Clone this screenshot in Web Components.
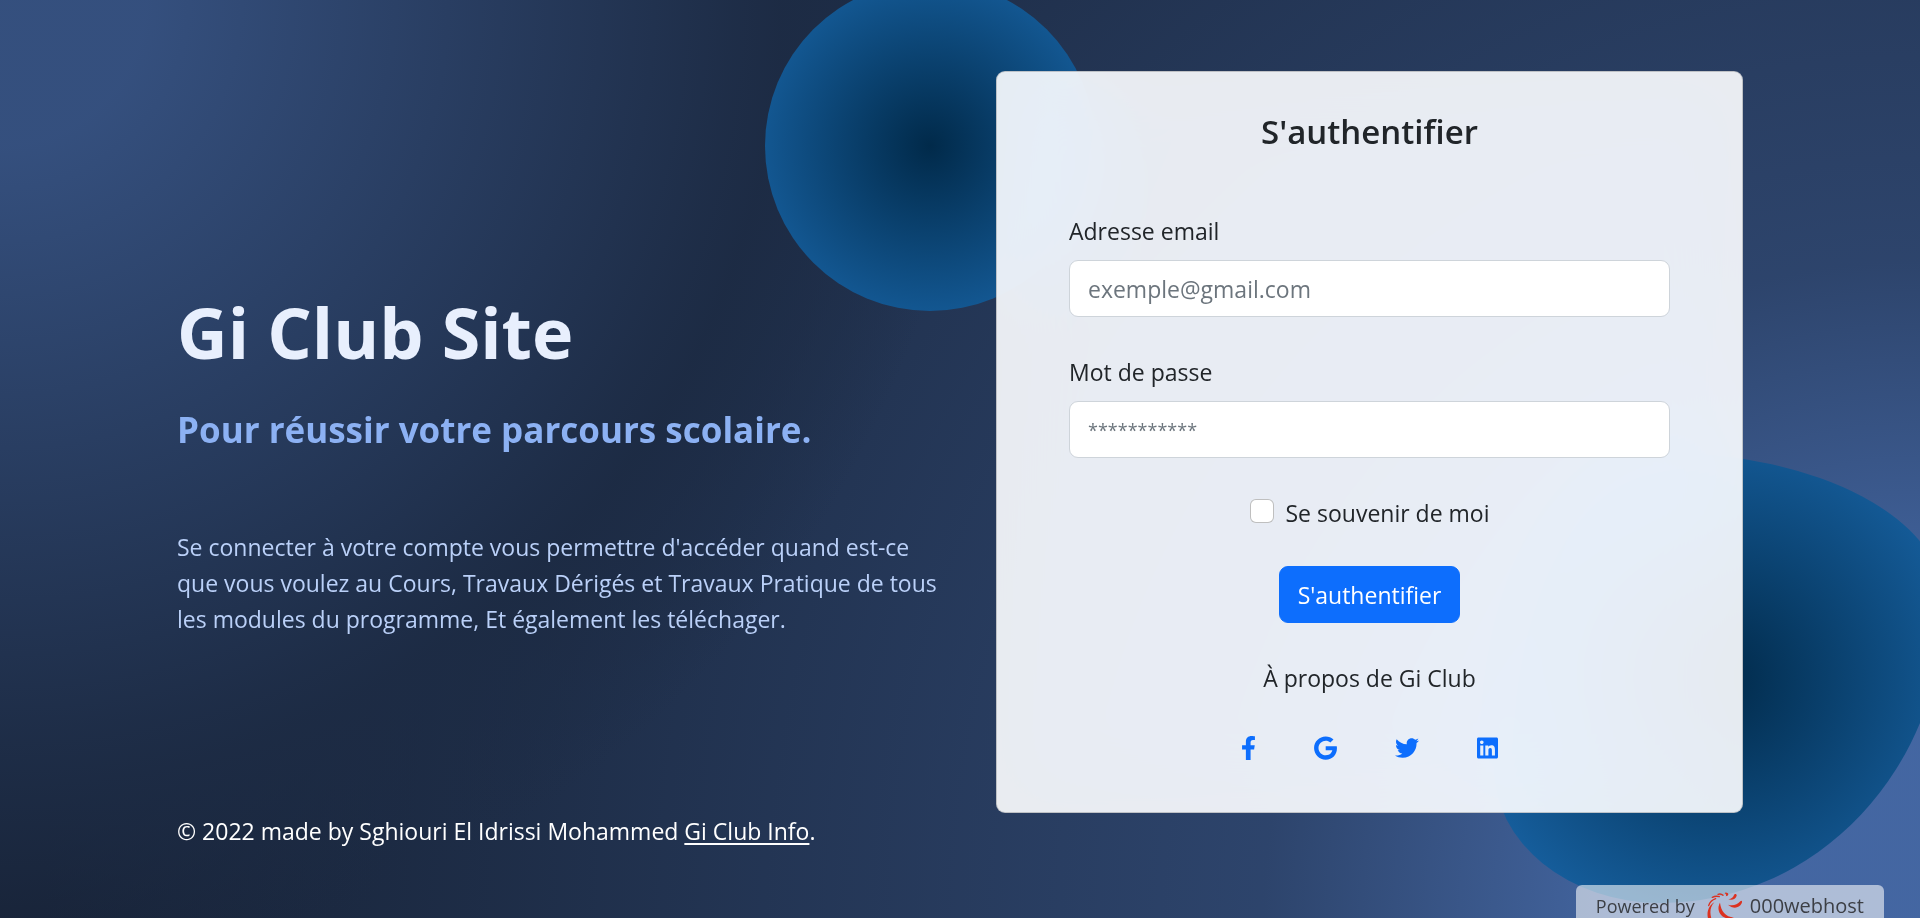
<!DOCTYPE html>
<html lang="fr">
<head>
<meta charset="utf-8">
<title>Gi Club Site</title>
<style>
  body { margin: 0; font-family: "Open Sans", "Noto Sans", sans-serif; font-size: 23px; line-height: 36px; color: #212529; }
</style>
</head>
<body>
<gi-page>
  <gi-hero slot="intro">
    <span slot="title">Gi Club Site</span>
    <span slot="tagline">Pour réussir votre parcours scolaire.</span>
    Se connecter à votre compte vous permettre d'accéder quand est-ce que vous voulez au Cours, Travaux Dérigés et Travaux Pratique de tous les modules du programme, Et également les téléchager.
  </gi-hero>
  <gi-login slot="login"></gi-login>
  <gi-footer slot="footer"></gi-footer>
</gi-page>
<gi-host-badge></gi-host-badge>

<script>
class GiElement extends HTMLElement {
  constructor() {
    super();
    this.attachShadow({ mode: "open" }).innerHTML =
      "<style>*{box-sizing:border-box}" + this.constructor.css + "</style>" + this.constructor.html;
  }
}

customElements.define("gi-page", class extends GiElement {
  static css = `
    :host { display: block; min-height: 100vh; overflow: hidden; position: relative;
      background-color: hsl(218,41%,15%);
      background-image:
        radial-gradient(975px circle at 0% 0%, hsl(218,41%,35%) 15%, hsl(218,41%,30%) 35%, hsl(218,41%,20%) 75%, hsl(218,41%,19%) 80%, transparent 100%),
        radial-gradient(1875px circle at 100% 100%, hsl(218,41%,45%) 15%, hsl(218,41%,30%) 35%, hsl(218,41%,20%) 75%, hsl(218,41%,19%) 80%, transparent 100%); }
    .container { max-width: 1710px; box-sizing: border-box; margin: 0 auto; padding: 71px 72px 48px; }
    .row { display: grid; grid-template-columns: minmax(0,1fr) minmax(0,1fr); gap: 72px; align-items: center; }
    .side { position: relative; }
    .shape { position: absolute; background: radial-gradient(#012a4a, #1a69ae); }
    .one { width: 330px; height: 330px; top: -90px; left: -231px; border-radius: 50%; }
    .two { width: 450px; height: 450px; bottom: -90px; right: -201px; border-radius: 38% 62% 63% 37% / 70% 33% 67% 30%; }
    ::slotted(gi-login) { position: relative; }
    @media (max-width: 1100px) {
      .container { padding: 48px 24px; }
      .row { grid-template-columns: minmax(0,1fr); }
    }`;
  static html = `
    <div class="container">
      <main class="row">
        <slot name="intro"></slot>
        <div class="side">
          <div class="shape one"></div>
          <div class="shape two"></div>
          <slot name="login"></slot>
        </div>
      </main>
      <slot name="footer"></slot>
    </div>`;
});

customElements.define("gi-hero", class extends GiElement {
  static css = `
    :host { display: block; padding-top: 40px; }
    h1 { margin: 0; font-size: 70px; line-height: 88px; font-weight: 700; color: hsl(218,81%,95%); }
    h1 .tag { display: block; margin-top: 10px; font-size: 35px; color: hsl(218,81%,75%); }
    p { margin: 55px -24px 0 0; color: hsl(218,81%,85%); }
    @media (max-width: 1100px) { p { margin-right: 0; } }`;
  static html = `
    <h1><slot name="title"></slot><span class="tag"><slot name="tagline"></slot></span></h1>
    <p><slot></slot></p>`;
});

customElements.define("gi-login", class extends GiElement {
  static css = `
    :host { display: block; border: 1px solid rgba(0,0,0,.18); border-radius: 9px; background: rgba(255,255,255,.9);
      backdrop-filter: saturate(200%) blur(38px); padding: 36px 72px 46px; }
    form { display: flex; flex-direction: column; align-items: center; }
    h2 { margin: 0 0 57px; font-size: 33px; line-height: 48px; font-weight: 600; }
    gi-field { align-self: stretch; margin-bottom: 37px; }
    .check { display: flex; align-items: flex-start; gap: 12px; margin-bottom: 35px; }
    .check input { appearance: none; width: 24px; height: 24px; margin: 4px 0 0; background: #fff; border: 1px solid rgba(0,0,0,.25); border-radius: 6px; }
    .check input:checked { background: #0d6efd; }
    button { font: inherit; color: #fff; background: #0d6efd; border: 1px solid #0d6efd; border-radius: 9px; padding: 10px 18px; height: 57px; margin-bottom: 37px; cursor: pointer; }
    p { margin: 0; }
    nav { display: flex; gap: 58px; margin-top: 34px; }
    nav a { display: block; height: 36px; padding: 6px 0; color: #0d6efd; }
    svg { display: block; height: 24px; fill: currentColor; }`;
  static html = `
    <form>
      <h2>S'authentifier</h2>
      <gi-field label="Adresse email" type="email" placeholder="exemple@gmail.com"></gi-field>
      <gi-field label="Mot de passe" type="password" placeholder="***********"></gi-field>
      <div class="check"><input type="checkbox" id="remember"><label for="remember">Se souvenir de moi</label></div>
      <button type="button">S'authentifier</button>
      <p>À propos de Gi Club</p>
      <nav>
        <a href="#facebook" aria-label="Facebook"><svg viewBox="0 0 320 512" width="15"><path d="M279.14 288l14.22-92.66h-88.91v-60.13c0-25.35 12.42-50.06 52.24-50.06h40.42V6.26S260.43 0 225.36 0c-73.22 0-121.08 44.38-121.08 124.72v70.62H22.89V288h81.39v224h100.17V288z"/></svg></a>
        <a href="#google" aria-label="Google"><svg viewBox="0 0 488 512" width="23"><path d="M488 261.8C488 403.3 391.1 504 248 504 110.8 504 0 393.2 0 256S110.8 8 248 8c66.8 0 123 24.5 166.3 64.9l-67.5 64.9C258.5 52.6 94.3 116.6 94.3 256c0 86.5 69.1 156.6 153.7 156.6 98.2 0 135-70.4 140.8-106.9H248v-85.3h236.1c2.3 12.7 3.9 24.9 3.9 41.4z"/></svg></a>
        <a href="#twitter" aria-label="Twitter"><svg viewBox="0 0 512 512" width="24"><path d="M459.37 151.716c.325 4.548.325 9.097.325 13.645 0 138.72-105.583 298.558-298.558 298.558-59.452 0-114.68-17.219-161.137-47.106 8.447.974 16.568 1.299 25.34 1.299 49.055 0 94.213-16.568 130.274-44.832-46.132-.975-84.792-31.188-98.112-72.772 6.498.974 12.995 1.624 19.818 1.624 9.421 0 18.843-1.3 27.614-3.573-48.081-9.747-84.143-51.98-84.143-102.985v-1.299c13.969 7.797 30.214 12.67 47.431 13.319-28.264-18.843-46.781-51.005-46.781-87.391 0-19.492 5.197-37.36 14.294-52.954 51.655 63.675 129.3 105.258 216.365 109.807-1.624-7.797-2.599-15.918-2.599-24.04 0-57.828 46.782-104.934 104.934-104.934 30.213 0 57.502 12.67 76.67 33.137 23.715-4.548 46.456-13.32 66.599-25.34-7.798 24.366-24.366 44.833-46.132 57.827 21.117-2.273 41.584-8.122 60.426-16.243-14.292 20.791-32.161 39.308-52.628 54.253z"/></svg></a>
        <a href="#linkedin" aria-label="LinkedIn"><svg viewBox="0 0 448 512" width="21"><path d="M416 32H31.9C14.3 32 0 46.5 0 64.3v383.4C0 465.5 14.3 480 31.9 480H416c17.6 0 32-14.5 32-32.3V64.3c0-17.8-14.4-32.3-32-32.3zM135.4 416H69V202.2h66.5V416zm-33.2-243c-21.3 0-38.5-17.3-38.5-38.5S80.9 96 102.2 96c21.2 0 38.5 17.3 38.5 38.5 0 21.3-17.2 38.5-38.5 38.5zm282.1 243h-66.4V312c0-24.8-.5-56.7-34.5-56.7-34.6 0-39.9 27-39.9 54.9V416h-66.4V202.2h63.7v29.2h.9c8.9-16.8 30.6-34.5 62.2-34.5 66.5 0 78.9 43.8 78.9 100.9V416z"/></svg></a>
      </nav>
    </form>`;
});

customElements.define("gi-field", class extends GiElement {
  static css = `
    :host { display: block; }
    label { display: block; margin-bottom: 11px; }
    input { display: block; width: 100%; height: 57px; padding: 9px 18px; font: inherit; color: #212529; background: #fff; border: 1px solid #ced4da; border-radius: 9px; }
    input::placeholder { color: #6c757d; opacity: 1; }
    input[type=password] { font-size: 18px; }`;
  static html = `<label for="control"></label><input id="control">`;
  connectedCallback() {
    const input = this.shadowRoot.querySelector("input");
    this.shadowRoot.querySelector("label").textContent = this.getAttribute("label");
    input.type = this.getAttribute("type");
    input.placeholder = this.getAttribute("placeholder");
  }
});

customElements.define("gi-footer", class extends GiElement {
  static css = `
    :host { display: block; color: #fff; }
    a { color: inherit; text-underline-offset: 3px; }`;
  static html = `© 2022 made by Sghiouri El Idrissi Mohammed <a href="#info">Gi Club Info</a>.`;
});

customElements.define("gi-host-badge", class extends GiElement {
  static css = `
    :host { display: block; position: fixed; right: 36px; bottom: 0;
      border-radius: 6px 6px 0 0; background: rgba(255,255,255,.57); color: #3c3f45; }
    a { display: flex; align-items: flex-end; height: 33px; padding: 0 20px; color: inherit; text-decoration: none; line-height: 24px; }
    span { font-size: 18px; }
    svg { margin: 0 6px 0 10px; fill: none; stroke: #dc3220; stroke-linecap: round; }
    .blade { fill: #dc3220; stroke: none; }
    b { font-size: 20px; font-weight: 500; }`;
  static html = `
    <a href="#host"><span>Powered by</span>
      <svg width="39" height="33" viewBox="405 21 117 99">
        <path class="blade" d="M450 74C439 93 448 118 476 122L492 118C466 117 453 99 450 74Z"/>
        <path class="blade" d="M474 80C488 84 501 81 511 70C515 66 518 70 515 76C507 92 488 93 474 80Z"/>
        <path class="blade" d="M433 73C417 82 409 102 414 121L424 121C419 104 420 86 433 73Z"/>
        <path class="blade" d="M475 64C485 63 490 57 492 51C494 46 501 48 500 53C497 63 487 68 475 64Z"/>
        <path class="blade" d="M467 55C471 51 467 48 464 46C465 41 475 44 475 49C475 53 471 55 467 55Z"/>
        <path stroke-width="4" d="M416 83Q421 67 437 62M427 58Q437 53 448 56M444 49Q453 46 459 52"/>
      </svg>
      <b>000webhost</b></a>`;
});
</script>
</body>
</html>
